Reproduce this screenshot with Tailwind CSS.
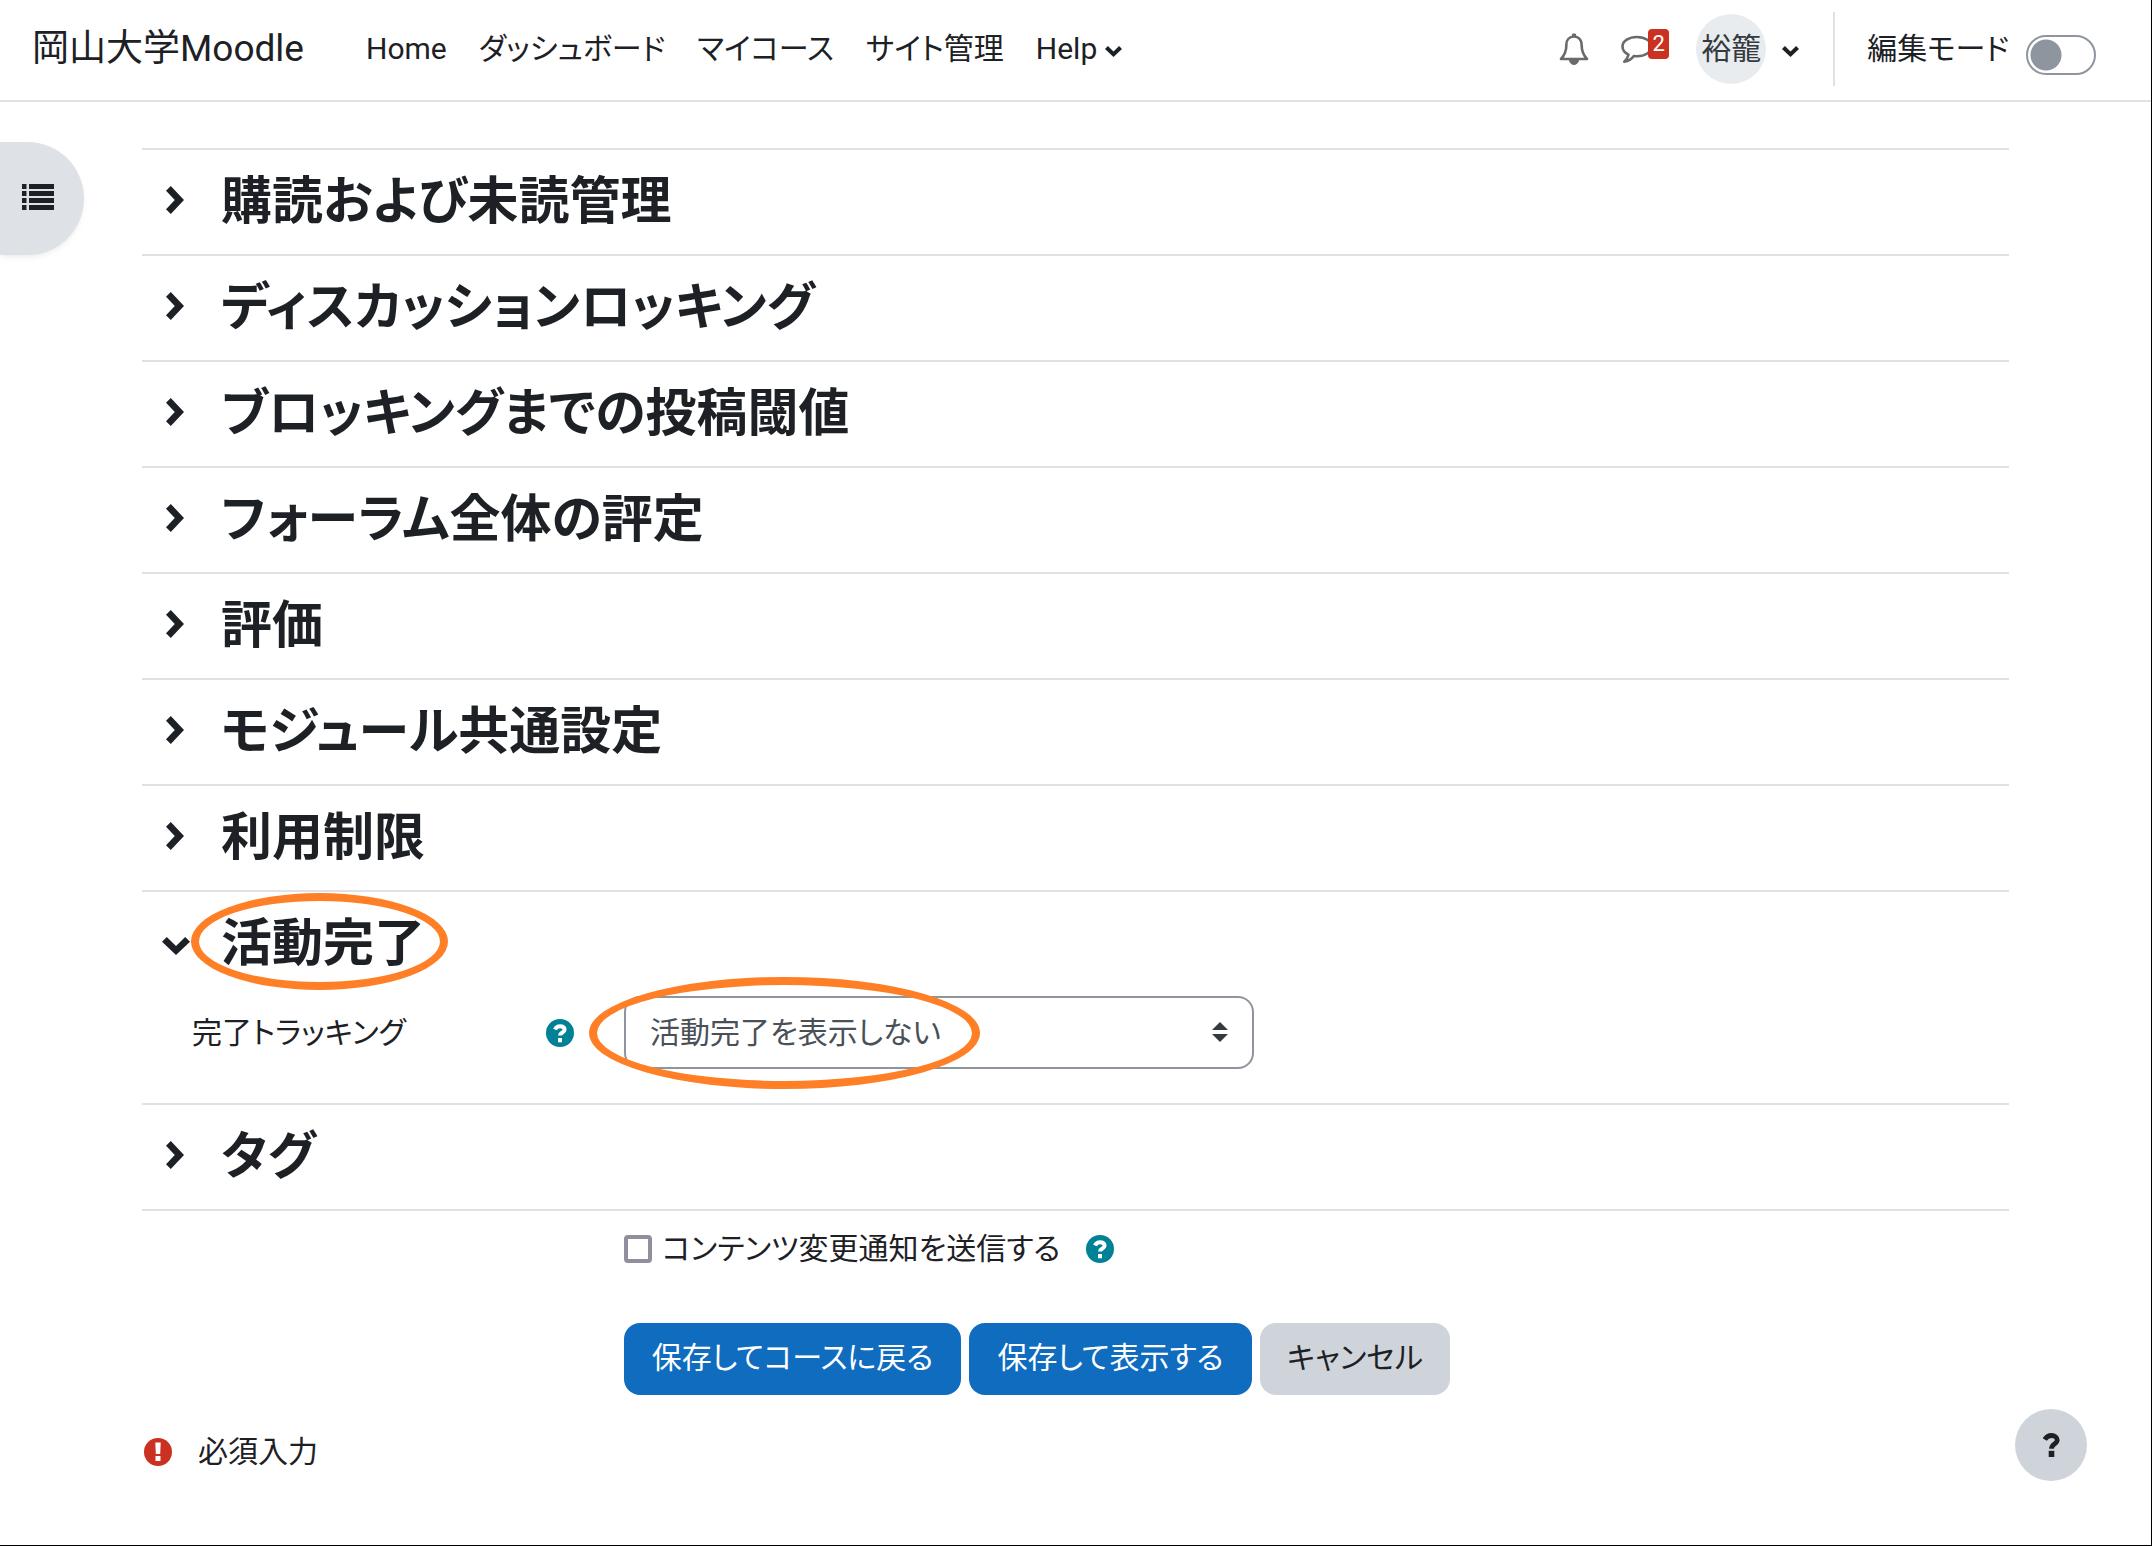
<!DOCTYPE html>
<html lang="ja">
<head>
<meta charset="utf-8">
<meta name="viewport" content="width=device-width, initial-scale=1">
<title>岡山大学Moodle</title>
<script src="https://cdn.jsdelivr.net/npm/@tailwindcss/browser@4"></script>
</head>
<body class="relative flex min-h-screen flex-col border-r border-b border-black bg-white font-['Roboto','Noto_Sans_CJK_JP',sans-serif] text-[30px] leading-[44px] text-[#1d2125] [font-feature-settings:'palt']">

<svg class="hidden" aria-hidden="true">
  <symbol id="right" viewBox="0 0 18 28"><path d="M0 4.800 4.800 0 18 14 4.800 28 0 23.200 8.800 14z"/></symbol>
  <symbol id="down" viewBox="0 0 28 18"><path d="M0 4.800 4.800 0 14 9 23.200 0 28 4.800 14 18z"/></symbol>
  <symbol id="question" viewBox="0 0 28 28"><circle cx="14" cy="14" r="14"/><path d="M9 10.600C10 8.200 11.700 7.200 14.100 7.200c2.700 0 4.500 1.400 4.500 3.500 0 3-4.600 2.700-4.600 5.900" fill="none" stroke="#fff" stroke-width="4"/><path d="M12 19h4v4.300h-4z" fill="#fff"/></symbol>
</svg>

<header class="flex h-[102px] items-center border-b-2 border-[#dee2e6] pr-[55px] pb-0.5 pl-8">
  <a href="#" class="mr-[62px] text-[37px] text-[#1d2125]">岡山大学Moodle</a>
  <nav class="flex items-center gap-8">
    <a href="#">Home</a>
    <a href="#">ダッシュボード</a>
    <a href="#">マイコース</a>
    <a href="#">サイト管理</a>
    <a href="#" class="flex items-center gap-2">Help
      <svg class="mt-1 h-[11px] w-[17px] fill-current"><use href="#down"/></svg></a>
  </nav>
  <div class="ml-auto flex items-center">
    <button type="button" aria-label="通知" class="mr-8">
      <svg class="h-8 w-[30px]" viewBox="0 0 30 32" fill="none" stroke="#6a6a6a" stroke-width="2.600" stroke-linejoin="round"><path d="M15 3.500c-4.700 0-7.600 3.400-7.600 8 0 7-2 11-5.400 14.500h26c-3.400-3.500-5.400-7.500-5.400-14.500 0-4.600-2.900-8-7.600-8z"/><path d="M13.500 3V1h3v2M10.500 27a4.500 4.500 0 0 0 9 0z" fill="#6a6a6a" stroke-width="1"/></svg>
    </button>
    <button type="button" aria-label="メッセージ" class="relative mr-[27px] w-12">
      <svg class="h-[30px] w-8" viewBox="0 0 32 30" fill="none" stroke="#6a6a6a" stroke-width="2.600" stroke-linejoin="round"><path d="M16 3C8 3 1.500 7 1.500 12.500c0 3.500 2.400 6.400 6 8.200-.5 2.500-1.800 4.500-4.200 7 4.200-.6 7.300-2.600 9.500-5.700 1 .2 2.100.3 3.200.3 8 0 14.500-4.200 14.500-9.700S24 3 16 3z"/></svg>
      <span class="absolute -top-[5px] right-0 h-[30px] w-[21px] rounded-sm bg-[#ca3120] text-center text-[22px] leading-[30px] text-white">2</span>
    </button>
    <button type="button" class="flex items-center gap-4">
      <span class="flex size-[70px] items-center justify-center rounded-full bg-[#e9ecef] text-[#343a40]">裕籠</span>
      <svg class="mt-1 h-[11px] w-[17px] fill-current"><use href="#down"/></svg>
    </button>
    <label class="ml-[34px] flex h-[74px] items-center gap-[17px] border-l-2 border-[#dee2e6] pl-8">編集モード
      <input type="checkbox" class="mt-3 h-10 w-[70px] appearance-none rounded-full border-2 border-[#8f959e] bg-[radial-gradient(circle_at_18px_18px,#8f959e_15px,#ffffff_16px)]">
    </label>
  </div>
</header>

<button type="button" aria-label="コースインデックスを開く" class="absolute top-[142px] left-0 flex h-[113px] w-[84px] items-center rounded-r-full bg-[#dee2e6] pb-1 pl-[22px] shadow-md shadow-black/5">
  <svg class="h-[26px] w-8 fill-current" viewBox="0 0 32 26"><path d="M0 0h4.500v5H0zM7 0h25v5H7zM0 7h4.500v5H0zM7 7h25v5H7zM0 14h4.500v5H0zM7 14h25v5H7zM0 21h4.500v5H0zM7 21h25v5H7z"/></svg>
</button>

<main class="mt-[46px] px-[142px]">
  <form>
    <section class="border-t-2 border-[#dee2e6]">
      <h3><button type="button" class="flex h-[104px] w-full items-center gap-[37px] pl-6 text-[51px] leading-[60px] font-bold"><svg class="mb-1 h-7 w-[18px] fill-current"><use href="#right"/></svg>購読および未読管理</button></h3>
    </section>
    <section class="border-t-2 border-[#dee2e6]">
      <h3><button type="button" class="flex h-[104px] w-full items-center gap-[37px] pl-6 text-[51px] leading-[60px] font-bold"><svg class="mb-1 h-7 w-[18px] fill-current"><use href="#right"/></svg>ディスカッションロッキング</button></h3>
    </section>
    <section class="border-t-2 border-[#dee2e6]">
      <h3><button type="button" class="flex h-[104px] w-full items-center gap-[37px] pl-6 text-[51px] leading-[60px] font-bold"><svg class="mb-1 h-7 w-[18px] fill-current"><use href="#right"/></svg>ブロッキングまでの投稿閾値</button></h3>
    </section>
    <section class="border-t-2 border-[#dee2e6]">
      <h3><button type="button" class="flex h-[104px] w-full items-center gap-[37px] pl-6 text-[51px] leading-[60px] font-bold"><svg class="mb-1 h-7 w-[18px] fill-current"><use href="#right"/></svg>フォーラム全体の評定</button></h3>
    </section>
    <section class="border-t-2 border-[#dee2e6]">
      <h3><button type="button" class="flex h-[104px] w-full items-center gap-[37px] pl-6 text-[51px] leading-[60px] font-bold"><svg class="mb-1 h-7 w-[18px] fill-current"><use href="#right"/></svg>評価</button></h3>
    </section>
    <section class="border-t-2 border-[#dee2e6]">
      <h3><button type="button" class="flex h-[104px] w-full items-center gap-[37px] pl-6 text-[51px] leading-[60px] font-bold"><svg class="mb-1 h-7 w-[18px] fill-current"><use href="#right"/></svg>モジュール共通設定</button></h3>
    </section>
    <section class="border-t-2 border-[#dee2e6]">
      <h3><button type="button" class="flex h-[104px] w-full items-center gap-[37px] pl-6 text-[51px] leading-[60px] font-bold"><svg class="mb-1 h-7 w-[18px] fill-current"><use href="#right"/></svg>利用制限</button></h3>
    </section>
    <section class="border-t-2 border-[#dee2e6] pb-[34px]">
      <h3 class="relative">
        <button type="button" class="flex h-[104px] w-full items-center gap-[31px] pl-5 text-[51px] leading-[60px] font-bold"><svg class="mt-1 h-[18px] w-7 fill-current"><use href="#down"/></svg>活動完了</button>
        <span class="pointer-events-none absolute top-px left-[49px] h-[97px] w-[257px] rounded-[50%] border-8 border-[#ff7f27]"></span>
      </h3>
      <div class="flex items-center">
        <div class="flex w-[482px] items-center justify-between pr-[50px] pl-[50px]">
          <label for="completion">完了トラッキング</label>
          <button type="button" aria-label="完了トラッキングに関するヘルプ"><svg class="size-7 fill-[#008196]"><use href="#question"/></svg></button>
        </div>
        <div class="relative w-[630px]">
          <select id="completion" class="block h-[73px] w-full appearance-none rounded-2xl border-2 border-[#8f959e] bg-white px-6 text-[#495057]">
            <option>活動完了を表示しない</option>
          </select>
          <svg class="pointer-events-none absolute top-[26px] right-[26px] h-5 w-4 fill-[#343a40]" viewBox="0 0 16 20"><path d="M0 8 8 0l8 8zM0 12h16l-8 8z"/></svg>
          <span class="pointer-events-none absolute -top-[19px] -left-[35px] h-[112px] w-[391px] rounded-[50%] border-8 border-[#ff7f27]"></span>
        </div>
      </div>
    </section>
    <section class="border-y-2 border-[#dee2e6]">
      <h3><button type="button" class="flex h-[104px] w-full items-center gap-[37px] pl-6 text-[51px] leading-[60px] font-bold"><svg class="mb-1 h-7 w-[18px] fill-current"><use href="#right"/></svg>タグ</button></h3>
    </section>

    <div class="mt-4 flex items-center pl-[482px]">
      <input id="notify" type="checkbox" class="mr-[10px] size-7 appearance-none rounded-sm border-4 border-[#8f8f9d] bg-white">
      <label for="notify">コンテンツ変更通知を送信する</label>
      <button type="button" aria-label="コンテンツ変更通知に関するヘルプ" class="ml-[26px]"><svg class="size-7 fill-[#008196]"><use href="#question"/></svg></button>
    </div>

    <div class="mt-[52px] flex gap-2 pl-[482px]">
      <button type="submit" class="h-[72px] w-[337px] rounded-2xl bg-[#0f6cbf] pb-0.5 text-white">保存してコースに戻る</button>
      <button type="submit" class="h-[72px] w-[283px] rounded-2xl bg-[#0f6cbf] pb-0.5 text-white">保存して表示する</button>
      <button type="button" class="h-[72px] w-[190px] rounded-2xl bg-[#ced4da] pb-0.5">キャンセル</button>
    </div>

    <div class="mt-[35px] flex items-center gap-[26px] pl-0.5">
      <svg class="size-7" viewBox="0 0 28 28"><circle cx="14" cy="14" r="14" fill="#ca3120"/><path d="M11.300 4.500h5.400l-.5 11.500h-4.400zM11.500 18h5v5h-5z" fill="#fff"/></svg>
      <span>必須入力</span>
    </div>
  </form>
</main>

<button type="button" aria-label="フッタを表示する" class="fixed right-[65px] bottom-[65px] flex size-[72px] items-center justify-center rounded-full bg-[#ced4da]">
  <svg class="h-6 w-[17px]" viewBox="0 0 17 24"><path d="M1.800 6.500C3.500 3.500 5.500 2.500 8.500 2.500c3.300 0 5.700 1.900 5.700 4.500 0 4-5.700 4-5.700 8.800" fill="none" stroke="#1d2125" stroke-width="4.800"/><path d="M5.700 17.800h5.600V24H5.700z" fill="#1d2125"/></svg>
</button>
</body>
</html>
